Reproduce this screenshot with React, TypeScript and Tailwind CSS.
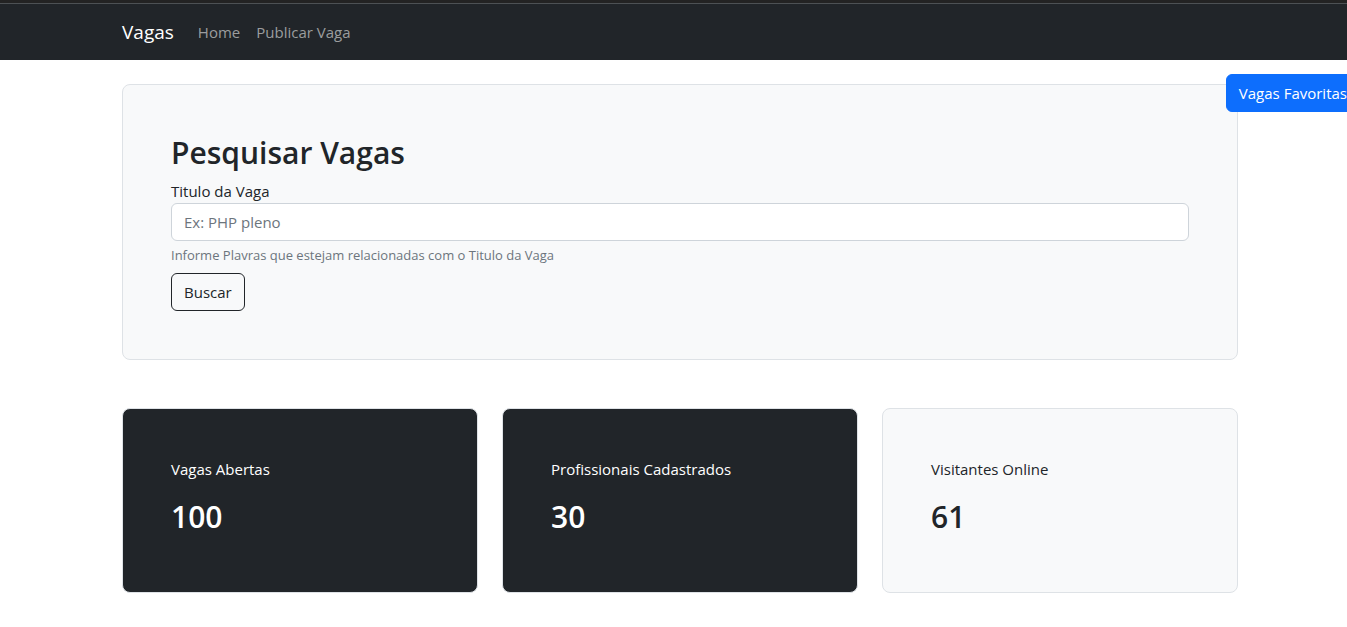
import React from 'react';

type Stat = { label: string; value: number; dark: boolean };

const stats: Stat[] = [
  { label: 'Vagas Abertas', value: 100, dark: true },
  { label: 'Profissionais Cadastrados', value: 30, dark: true },
  { label: 'Visitantes Online', value: 61, dark: false },
];

function Navbar() {
  return (
    <header className="border-t border-[#4d5154] bg-[#212529]">
      <nav className="mx-auto flex h-14 max-w-[1140px] items-center px-3">
        <a href="#" className="mr-6 text-[19px] leading-[30px] text-white">Vagas</a>
        <ul className="flex gap-4 text-[#9b9d9e]">
          <li><a href="#home">Home</a></li>
          <li><a href="#publicar">Publicar Vaga</a></li>
        </ul>
      </nav>
    </header>
  );
}

function SearchPanel() {
  return (
    <section className="rounded-lg border border-[#dee2e6] bg-[#f8f9fa] p-12">
      <h2 className="pb-[6px] text-[30px] leading-10 font-semibold">Pesquisar Vagas</h2>
      <form onSubmit={(e) => e.preventDefault()}>
        <label htmlFor="titulo" className="block">Titulo da Vaga</label>
        <input
          id="titulo"
          type="text"
          placeholder="Ex: PHP pleno"
          aria-describedby="titulo-ajuda"
          className="block w-full rounded-md border border-[#ced4da] bg-white px-3 py-1.5 placeholder:text-[#6c757d]"
        />
        <p id="titulo-ajuda" className="mt-1 mb-2 text-[13px] leading-5 text-[#6c757d]">
          Informe Plavras que estejam relacionadas com o Titulo da Vaga
        </p>
        <button type="submit" className="block rounded-md border border-[#212529] px-3 py-1.5">
          Buscar
        </button>
      </form>
    </section>
  );
}

function StatCard({ label, value, dark }: Stat) {
  const tone = dark ? 'bg-[#212529] text-white' : 'bg-[#f8f9fa] text-[#212529]';
  return (
    <article className={`rounded-lg border border-[#dee2e6] px-12 pt-12 pb-[55px] ${tone}`}>
      <p className="mb-4">{label}</p>
      <h2 className="text-[30px] leading-10 font-semibold">{value}</h2>
    </article>
  );
}

export default function App() {
  return (
    <div className="min-h-screen overflow-x-hidden bg-white">
      <div className="relative -mr-[13px] font-['Open_Sans','Noto_Sans',sans-serif] text-[15px] leading-6 text-[#212529]">
        <div className="h-[3px] bg-[#232323]" />
        <Navbar />
        <a href="#favoritas" className="absolute top-[74px] right-0 rounded-md border border-[#0d6efd] bg-[#0d6efd] px-3 py-1.5 text-white">
          Vagas Favoritas
        </a>
        <main className="mx-auto max-w-[1140px] px-3 py-6">
          <SearchPanel />
          <div className="mt-12 grid grid-cols-1 gap-6 md:grid-cols-3">
            {stats.map((s) => (
              <StatCard key={s.label} {...s} />
            ))}
          </div>
        </main>
      </div>
    </div>
  );
}
